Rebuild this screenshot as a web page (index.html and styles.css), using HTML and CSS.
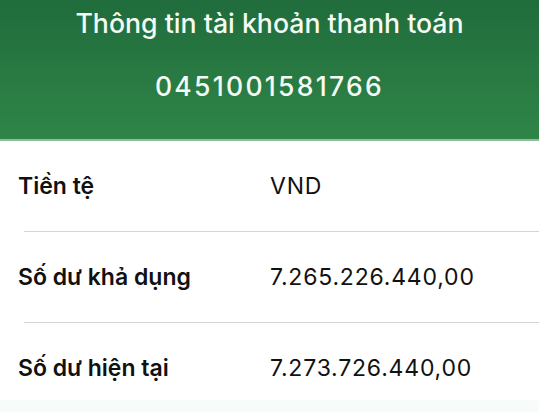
FILE: index.html
```html
<!DOCTYPE html>
<html lang="vi">
<head>
<meta charset="utf-8">
<link rel="stylesheet" href="styles.css">
</head>
<body>
<div class="screen">
  <header class="header">
    <div class="title">Thông tin tài khoản thanh toán</div>
    <div class="account">0451001581766</div>
  </header>
  <div class="list">
    <div class="row">
      <div class="label">Tiền tệ</div>
      <div class="value">VND</div>
    </div>
    <div class="row">
      <div class="label">Số dư khả dụng</div>
      <div class="value">7.265.226.440,00</div>
    </div>
    <div class="row">
      <div class="label">Số dư hiện tại</div>
      <div class="value">7.273.726.440,00</div>
    </div>
  </div>
  <div class="footer"></div>
</div>
</body>
</html>
```
FILE: styles.css
```css
html, body {
  margin: 0;
  padding: 0;
  background: #ffffff;
}
.screen {
  width: 539px;
  height: 412px;
  overflow: hidden;
  display: flex;
  flex-direction: column;
  font-family: Inter, "Liberation Sans", Arial, sans-serif;
}
.header {
  height: 139px;
  flex: none;
  background: linear-gradient(to bottom, #206c3c 0%, #2f8548 100%);
  border-bottom: 2px solid #8dbd9c;
  display: flex;
  flex-direction: column;
  align-items: center;
  color: #f4fbf5;
}
.title {
  font-size: 26.7px;
  line-height: 32px;
  margin-top: 7px;
  font-weight: 500;
}
.account {
  font-size: 26.5px;
  line-height: 32px;
  margin-top: 31px;
  font-weight: 500;
  letter-spacing: 2.3px;
}
.list {
  display: flex;
  flex-direction: column;
}
.row {
  height: 90px;
  display: flex;
  align-items: center;
  border-bottom: 1px solid #d4d4d4;
  margin-left: 24px;
  color: #111111;
}
.row:last-child {
  border-bottom: none;
  box-sizing: border-box;
  height: 77px;
  padding-top: 13px;
}
.label {
  width: 252px;
  margin-left: -6px;
  font-size: 23px;
  font-weight: 600;
}
.value {
  font-size: 23px;
  font-weight: 400;
  letter-spacing: 0.8px;
}
.footer {
  flex: 1;
  background: #f7fbf9;
}
```
